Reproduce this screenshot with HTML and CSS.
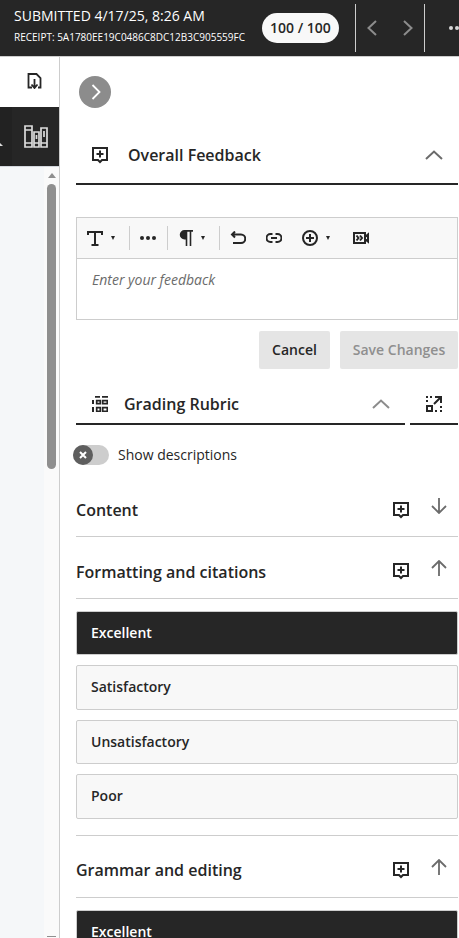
FILE: index.html
```html
<!DOCTYPE html>
<html lang="en">
<head>
<meta charset="utf-8">
<title>Grading</title>
<link rel="stylesheet" href="styles.css">
</head>
<body>
<header class="topbar">
  <div class="submission">
    <div class="submitted">SUBMITTED 4/17/25, 8:26 AM</div>
    <div class="receipt">RECEIPT: 5A1780EE19C0486C8DC12B3C905559FC</div>
  </div>
  <div class="score">100 / 100</div>
  <div class="pager">
    <svg class="pager-icon" viewBox="0 0 12 18"><path d="M10 2 2.500 9l7.500 7"/></svg>
    <svg class="pager-icon" viewBox="0 0 12 18"><path d="M2 2l7.500 7L2 16"/></svg>
  </div>
  <div class="more"><i></i><i></i><i></i></div>
</header>
<div class="layout">
  <aside class="rail">
    <div class="rail-top">
      <svg class="ico16" viewBox="0 0 16 16"><path class="blk" d="M5 14.500H1.500V1h8l4 4v9.500H11M7.500 6v9M4.500 11.500l3 3.500 3-3.500"/></svg>
    </div>
    <div class="rail-dark">
      <span class="rail-stub"></span>
      <svg class="books" viewBox="0 0 24 24"><path d="M1 2h7v21H1zM1 6h7M1 19h7M10 8h5v15h-5zM10 19h5M17 4h6v19h-6zM17 19h6M12.500 11v4M20 7v6"/></svg>
    </div>
    <div class="rail-body">
      <div class="rail-list"></div>
      <div class="scrollbar">
        <span class="arrow-up"></span>
        <span class="thumb"></span>
        <span class="spacer"></span>
        <span class="arrow-down"></span>
      </div>
    </div>
  </aside>
  <main class="panel">
    <button class="round-btn"><svg viewBox="0 0 12 18"><path d="M2.500 2 9.500 9l-7 7"/></svg></button>

    <section class="feedback-head">
      <svg class="ico-comment" viewBox="0 0 16 17"><path d="M1 1h14v12h-5l-2 2-2-2H1zM8 3.500v7M4.500 7h7"/></svg>
      <h2 class="feedback-title">Overall Feedback</h2>
      <svg class="chev-up" viewBox="0 0 18 10"><path d="M1 9l8-7.500L17 9"/></svg>
    </section>

    <div class="editor">
      <div class="toolbar">
        <span class="tool tool-t">
          <svg class="tb t-ic" viewBox="0 0 16 16"><path d="M1 5V2h14v3M8 2v13M4.500 15h7"/></svg><span class="caret"></span>
        </span>
        <span class="sep"></span>
        <span class="tool tool-dots"><i></i><i></i><i></i></span>
        <span class="sep"></span>
        <span class="tool tool-p">
          <svg class="p-ic" viewBox="0 0 14 16"><path d="M14 0v1.700h-1.700V16h-1.600V1.700H8.300V16H6.700V9.500H5.500a4.750 4.750 0 0 1 0-9.500z"/></svg><span class="caret"></span>
        </span>
        <span class="sep"></span>
        <svg class="tb undo" viewBox="0 0 16 14"><path d="M2 3.500h9a4 4 0 0 1 0 8.500H3M5 .5 2 3.500l3 3"/></svg>
        <svg class="tb link" viewBox="0 0 16 10"><path d="M6.500 1H4.500a4 4 0 0 0 0 8h2M9.500 1h2a4 4 0 0 1 0 8h-2M5 5h6"/></svg>
        <svg class="tb plus" viewBox="0 0 16 16"><circle cx="8" cy="8" r="7"/><path d="M8 4v8M4 8h8"/></svg><span class="caret caret-plus"></span>
        <svg class="tb video" viewBox="0 0 16 12"><path d="M1 1h11v10H1zM12 5l3-2.500v7L12 7M3.500 3.500 5.500 6l-2 2.500M7 3.500 9 6 7 8.500"/></svg>
      </div>
      <div class="editor-body">Enter your feedback</div>
    </div>

    <div class="actions">
      <button class="btn">Cancel</button>
      <button class="btn btn-off">Save Changes</button>
    </div>

    <section class="rubric-head">
      <div class="rubric-main">
        <svg class="ico-grid" viewBox="0 0 16 16"><path class="fill" d="M3 0h5v1.700H3zM10 0h6v1.700h-6zM0 4h2v4H0zM0 11h2v5H0z"/><path class="outline" d="M4.700 4.700h3.600v3H4.700zM10.700 4.700h4.600v3h-4.600zM4.700 11.700h3.600v3.600H4.700zM10.700 11.700h4.600v3.600h-4.600z"/></svg>
        <h2 class="rubric-title">Grading Rubric</h2>
        <svg class="chev-up chev-rubric" viewBox="0 0 18 10"><path d="M1 9l8-7.500L17 9"/></svg>
      </div>
      <div class="rubric-expand">
        <svg class="ico-expand" viewBox="0 0 16 16"><path class="fill-dots" d="M0 0h2v2H0zM4 0h2v2H4zM0 4h2v2H0zM9 14h2v2H9zM14 14h2v2h-2zM14 10h2v2h-2z"/><path d="M1 10h5v5H1zM8 8l6.500-6.500M9 1h6v6"/></svg>
      </div>
    </section>

    <div class="toggle-row">
      <span class="toggle"><span class="knob"><svg viewBox="0 0 10 10"><path d="M2 2l6 6M8 2l-6 6"/></svg></span></span>
      <span class="toggle-label">Show descriptions</span>
    </div>

    <div class="criterion criterion-first">
      <h3>Content</h3>
      <svg class="ico-comment-sm" viewBox="0 0 16 17"><path d="M1 1h14v12h-5l-2 2-2-2H1zM8 3.500v7M4.500 7h7"/></svg>
      <svg class="arrow" viewBox="0 0 16 16"><path d="M8 0v15M1 8l7 7 7-7"/></svg>
    </div>
    <div class="criterion">
      <h3>Formatting and citations</h3>
      <svg class="ico-comment-sm" viewBox="0 0 16 17"><path d="M1 1h14v12h-5l-2 2-2-2H1zM8 3.500v7M4.500 7h7"/></svg>
      <svg class="arrow" viewBox="0 0 16 16"><path d="M8 16V1M1 8l7-7 7 7"/></svg>
    </div>
    <div class="levels">
      <div class="level level-on">Excellent</div>
      <div class="level">Satisfactory</div>
      <div class="level">Unsatisfactory</div>
      <div class="level">Poor</div>
    </div>
    <div class="criterion">
      <h3 class="title-raised">Grammar and editing</h3>
      <svg class="ico-comment-sm" viewBox="0 0 16 17"><path d="M1 1h14v12h-5l-2 2-2-2H1zM8 3.500v7M4.500 7h7"/></svg>
      <svg class="arrow" viewBox="0 0 16 16"><path d="M8 16V1M1 8l7-7 7 7"/></svg>
    </div>
    <div class="levels">
      <div class="level level-on">Excellent</div>
    </div>
  </main>
</div>
</body>
</html>
```
FILE: styles.css
```css
* { box-sizing: border-box; }
html, body { margin: 0; padding: 0; }
body {
  width: 459px;
  height: 938px;
  overflow: hidden;
  background: #fff;
  color: #262626;
  font-family: "Open Sans", "Liberation Sans", sans-serif;
}
svg { display: block; flex: none; fill: none; stroke-linejoin: miter; }
h2, h3 { margin: 0; font-weight: 600; }

.topbar {
  height: 57px;
  background: #262626;
  border-bottom: 1px solid #cdcdcd;
  display: flex;
  align-items: center;
  color: #fff;
  overflow: hidden;
}
.submission { width: 262px; padding-left: 14px; flex: none; }
.submitted { font-size: 14px; line-height: 19px; margin-top: -6px; }
.receipt { font-size: 10px; line-height: 13px; margin-top: 6px; white-space: nowrap; }
.score {
  width: 77px; height: 30px; flex: none;
  margin-top: -1px;
  border-radius: 15px;
  background: #f8f8f8;
  color: #262626;
  font-size: 14px; font-weight: 600;
  line-height: 30px;
  text-align: center;
}
.pager {
  margin-left: 16px;
  width: 70px; height: 48px; flex: none;
  margin-top: -1px;
  border-left: 1px solid #cdcdcd;
  border-right: 1px solid #cdcdcd;
  display: flex; align-items: center; justify-content: space-between;
  padding: 0 10px 0 10px;
}
.pager-icon { width: 12px; height: 18px; stroke: #8c8c8c; stroke-width: 2; }
.more { display: flex; gap: 2px; margin-left: 24px; flex: none; margin-top: -1px; }
.more i { width: 4px; height: 4px; border-radius: 50%; background: #d8d8d8; flex: none; }

.layout { display: flex; height: 881px; }
.rail { width: 60px; flex: none; border-right: 1px solid #cdcdcd; display: flex; flex-direction: column; }
.rail-top { height: 50px; display: flex; align-items: center; justify-content: flex-end; padding: 0 16px 3px 0; }
.ico16 { width: 16px; height: 16px; }
.blk { stroke: #262626; stroke-width: 1.800; }
.rail-dark { height: 60px; background: linear-gradient(90deg, #222 12px, #262626 12px); display: flex; align-items: center; justify-content: flex-end; padding-right: 11px; position: relative; border-bottom: 1px solid #d4d8de; }
.rail-stub { position: absolute; left: 0; top: 36px; width: 3px; height: 3px; background: #ddd; clip-path: polygon(0 100%, 0 0, 100% 100%); }
.books { width: 24px; height: 24px; stroke: #dcdcdc; stroke-width: 1.700; margin-top: -1px; }
.rail-body { flex: 1; display: flex; min-height: 0; }
.rail-list { width: 44px; background: #f5f7f9; flex: none; }
.scrollbar { width: 15px; background: #fafafa; display: flex; flex-direction: column; align-items: center; padding: 6px 0 0; }
.arrow-up { width: 0; height: 0; border: 4.500px solid transparent; border-top: 0; border-bottom: 5px solid #8f8f8f; flex: none; }
.thumb { width: 9px; height: 285px; margin-top: 6px; background: #8f8f8f; border-radius: 5px; flex: none; }
.spacer { flex: 1; }
.arrow-down { width: 9px; height: 1px; background: #8f8f8f; margin-bottom: 1px; flex: none; }

.panel { flex: 1; min-width: 0; padding: 19px 1px 0 16px; overflow: hidden; }
.round-btn {
  display: flex; align-items: center; justify-content: center;
  width: 32px; height: 32px; margin: 0 0 0 3px; padding: 0 0 0 1px;
  border: 0; border-radius: 50%; background: #8c8c8c;
}
.round-btn svg { width: 12px; height: 18px; stroke: #fff; stroke-width: 1.800; }

.feedback-head {
  height: 77px; margin-top: 0;
  border-bottom: 2px solid #262626;
  display: flex; align-items: center;
  padding: 19px 15px 0 16px;
}
.ico-comment { width: 16px; height: 17px; stroke: #262626; stroke-width: 2; }
.feedback-title { font-size: 16px; line-height: 22px; margin-left: 20px; flex: 1; }
.chev-up { width: 18px; height: 10px; stroke: #6b6b6b; stroke-width: 2; }

.editor { margin-top: 32px; height: 103px; border: 1px solid #cdcdcd; }
.toolbar { height: 41px; background: #f8f8f8; border-bottom: 1px solid #cdcdcd; display: flex; align-items: center; }
.sep { width: 1px; height: 24px; background: #cdcdcd; flex: none; }
.tool { display: flex; align-items: center; flex: none; }
.tb { stroke: #262626; stroke-width: 2; }
.t-ic { width: 16px; height: 16px; }
.tool-t { width: 52px; padding-left: 10px; }
.caret { width: 0; height: 0; border: 2.500px solid transparent; border-top: 4px solid #262626; border-bottom: 0; margin-left: 8px; flex: none; }
.tool-dots { width: 36.500px; justify-content: center; gap: 2px; }
.tool-dots i { width: 4px; height: 4px; border-radius: 50%; background: #262626; flex: none; }
.tool-p { width: 51px; padding-left: 11px; }
.p-ic { width: 14px; height: 16px; fill: #262626; }
.undo { width: 16px; height: 14px; margin-left: 10px; }
.link { width: 16px; height: 10px; margin-left: 20px; }
.plus { width: 16px; height: 16px; margin-left: 20px; }
.caret-plus { margin-left: 8px; }
.video { width: 16px; height: 12px; margin-left: 23px; }
.editor-body { padding: 11px 15px; font-size: 14px; line-height: 20px; font-style: italic; color: #6b6b6b; }

.actions { margin-top: 11px; display: flex; justify-content: flex-end; gap: 10px; }
.btn {
  height: 38px; padding: 0 0 2px; border: 0; border-radius: 2px;
  background: #e5e5e5; color: #262626;
  font-family: inherit; font-size: 14px; font-weight: 600;
  width: 71px;
}
.btn-off { width: 118px; color: #8f8f8f; }

.rubric-head { margin-top: 15px; display: flex; gap: 5px; height: 41px; }
.rubric-main { width: 329px; flex: none; border-bottom: 2px solid #262626; display: flex; align-items: center; padding: 1px 15px 0 16px; }
.ico-grid { width: 16px; height: 16px; }
.fill { fill: #262626; }
.outline { stroke: #262626; stroke-width: 1.700; }
.rubric-title { font-size: 16px; line-height: 22px; margin-left: 16px; flex: 1; }
.chev-rubric { stroke: #8c8c8c; }
.rubric-expand { flex: 1; border-bottom: 2px solid #262626; display: flex; align-items: center; justify-content: center; padding: 1px 0 0; }
.ico-expand { width: 16px; height: 16px; stroke: #262626; stroke-width: 2; }
.fill-dots { fill: #262626; stroke: none; }

.toggle-row { margin-top: 20px; margin-left: -3px; display: flex; align-items: center; height: 20px; }
.toggle { width: 36px; height: 20px; border-radius: 10px; background: #cdcdcd; flex: none; display: flex; }
.knob { width: 20px; height: 20px; border-radius: 50%; background: #5e5e5e; display: flex; align-items: center; justify-content: center; }
.knob svg { width: 10px; height: 10px; stroke: #fff; stroke-width: 2; }
.toggle-label { margin-left: 9px; font-size: 14px; line-height: 20px; color: #262626; }

.criterion { height: 62px; border-bottom: 1px solid #cdcdcd; display: flex; align-items: center; padding-top: 8px; }
.criterion-first { margin-top: 9px; height: 63px; padding-top: 10px; }
.criterion h3 { font-size: 16px; line-height: 22px; flex: 1; }
.criterion .title-raised { padding-bottom: 2px; line-height: 22px; }
.ico-comment-sm { width: 16px; height: 17px; stroke: #262626; stroke-width: 2; }
.arrow { width: 16px; height: 16px; margin: -8px 11px 0 22px; stroke: #6b6b6b; stroke-width: 1.800; }

.levels { padding: 12px 0 16.500px; display: flex; flex-direction: column; gap: 10px; border-bottom: 1px solid #cdcdcd; }
.level {
  height: 44.500px; padding: 0 14px;
  border: 1px solid #cdcdcd; border-radius: 2px;
  background: #f8f8f8;
  font-size: 14px; font-weight: 600; line-height: 41.500px;
}
.level-on { background: #262626; color: #fff; height: 44px; line-height: 42px; }
```
